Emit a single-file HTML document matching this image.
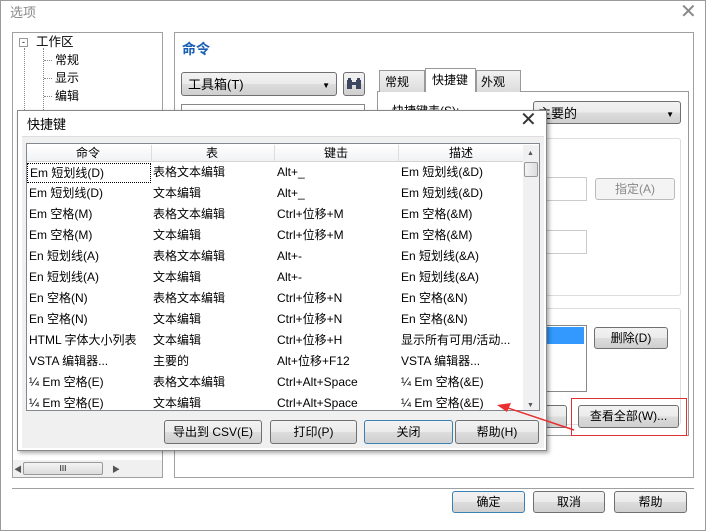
<!DOCTYPE html>
<html><head><meta charset="utf-8"><style>
*{margin:0;padding:0;box-sizing:border-box}
body{width:706px;height:531px;overflow:hidden;background:#fff;font-family:"Liberation Sans","Noto Sans CJK SC",sans-serif;font-size:12px;color:#000;position:relative;line-height:15px}
.a{position:absolute}
.btn{position:absolute;border:1px solid #707070;border-radius:3px;background:linear-gradient(#f2f2f2,#ebebeb 50%,#dddddd 50%,#cfcfcf);text-align:center;font-size:12px;white-space:nowrap}
.box{position:absolute;border:1px solid #a0a0a0;background:#fff}
.row{position:absolute;left:0;height:21px;width:497px}
.row span{position:absolute;top:3px;white-space:nowrap}
</style></head><body>
<div class="a" style="left:0;top:0;width:706px;height:531px;border:1px solid #9a9a9a;background:#fff"></div>
<div class="a" style="left:10px;top:5px;color:#8a8a8a;font-size:13px">选项</div>
<div class="a" style="left:680px;top:0px;color:#888;font-size:20px;line-height:24px">✕</div>

<!-- left tree -->
<div class="box" style="left:12px;top:32px;width:151px;height:446px"></div>
<div class="a" style="left:19px;top:38px;width:9px;height:9px;border:1px solid #999;font-size:9px;line-height:6px;text-align:center">-</div>
<div class="a" style="left:36px;top:35px;font-size:12.5px">工作区</div>
<div class="a" style="left:24px;top:48px;height:62px;border-left:1px dotted #888"></div>
<div class="a" style="left:43px;top:48px;height:62px;border-left:1px dotted #888"></div>
<div class="a" style="left:44px;top:60px;width:8px;border-top:1px dotted #888"></div>
<div class="a" style="left:44px;top:78px;width:8px;border-top:1px dotted #888"></div>
<div class="a" style="left:44px;top:96px;width:8px;border-top:1px dotted #888"></div>
<div class="a" style="left:55px;top:53px">常规</div>
<div class="a" style="left:55px;top:71px">显示</div>
<div class="a" style="left:55px;top:89px">编辑</div>
<div class="a" style="left:13px;top:460px;width:149px;height:17px;background:#f0f0f0"></div>
<div class="a" style="left:23px;top:462px;width:80px;height:13px;border:1px solid #999;border-radius:2px;background:linear-gradient(#f4f4f4,#dcdcdc);font-size:8px;text-align:center;line-height:11px">III</div>
<div class="a" style="left:14px;top:462px;font-size:8px;color:#555">◀</div>
<div class="a" style="left:112px;top:462px;font-size:8px;color:#555">▶</div>

<!-- right panel -->
<div class="box" style="left:174px;top:32px;width:520px;height:446px"></div>
<div class="a" style="left:182px;top:42px;color:#1a5fb4;font-size:14px;font-weight:bold">命令</div>
<div class="btn" style="left:181px;top:72px;width:156px;height:24px;text-align:left;padding:4px 6px;font-size:13px">工具箱(T)<span style="position:absolute;right:6px;top:5px;font-size:8px">▼</span></div>
<div class="btn" style="left:343px;top:72px;width:22px;height:24px"><svg width="20" height="22" viewBox="0 0 20 22"><rect x="3" y="7" width="5" height="9" fill="#3c4660"/><rect x="12" y="7" width="5" height="9" fill="#3c4660"/><rect x="7" y="9" width="6" height="3" fill="#3c4660"/><rect x="4" y="5" width="3" height="3" fill="#3c4660"/><rect x="13" y="5" width="3" height="3" fill="#3c4660"/></svg></div>
<div class="box" style="left:181px;top:104px;width:184px;height:10px;border-color:#888"></div>

<div class="box" style="left:377px;top:91px;width:312px;height:345px;border-color:#999"></div>
<div class="a" style="left:379px;top:70px;width:46px;height:22px;border:1px solid #999;border-bottom:none;background:linear-gradient(#f2f2f2,#dcdcdc);padding:4px 5px">常规</div>
<div class="a" style="left:425px;top:68px;width:51px;height:24px;border:1px solid #999;border-bottom:none;background:#fff;padding:4px 6px">快捷键</div>
<div class="a" style="left:476px;top:70px;width:45px;height:22px;border:1px solid #999;border-bottom:none;background:linear-gradient(#f2f2f2,#dcdcdc);padding:4px 4px">外观</div>
<div class="a" style="left:392px;top:104px">快捷键表(S):</div>
<div class="btn" style="left:533px;top:101px;width:148px;height:23px;text-align:left;padding:4px 4px;font-size:13px">主要的<span style="position:absolute;right:6px;top:5px;font-size:8px">▼</span></div>
<div class="a" style="left:545px;top:138px;width:136px;height:158px;border:1px solid #ddd;border-radius:3px"></div>
<div class="box" style="left:545px;top:177px;width:42px;height:24px;border-color:#ccc"></div>
<div class="btn" style="left:595px;top:178px;width:80px;height:22px;border-color:#bbb;color:#888;background:#f4f4f4;line-height:20px">指定(A)</div>
<div class="box" style="left:545px;top:230px;width:42px;height:24px;border-color:#ccc"></div>
<div class="a" style="left:545px;top:308px;width:136px;height:117px;border:1px solid #ddd;border-radius:3px"></div>
<div class="box" style="left:545px;top:325px;width:42px;height:67px;border-color:#888"></div>
<div class="a" style="left:546px;top:327px;width:38px;height:17px;background:#3399ff"></div>
<div class="btn" style="left:594px;top:327px;width:74px;height:22px;line-height:20px">删除(D)</div>
<div class="btn" style="left:540px;top:405px;width:27px;height:23px"></div>
<div class="btn" style="left:578px;top:405px;width:101px;height:23px;line-height:21px">查看全部(W)...</div>
<div class="a" style="left:571px;top:398px;width:116px;height:38px;border:1px solid #e03030"></div>

<div class="a" style="left:12px;top:488px;width:682px;border-top:1px solid #a0a0a0"></div>
<div class="btn" style="left:452px;top:491px;width:73px;height:22px;border-color:#3c7fb1;line-height:20px">确定</div>
<div class="btn" style="left:533px;top:491px;width:72px;height:22px;line-height:20px">取消</div>
<div class="btn" style="left:614px;top:491px;width:73px;height:22px;line-height:20px">帮助</div>

<!-- sub dialog -->
<div class="a" style="left:17px;top:110px;width:530px;height:341px;border:1px solid #888;background:#fff;box-shadow:2px 2px 4px rgba(0,0,0,.35)"></div>
<div class="a" style="left:27px;top:117px;font-size:13px">快捷键</div>
<div class="a" style="left:520px;top:108px;font-size:20px;color:#333;line-height:24px">✕</div>
<div class="a" style="left:22px;top:136px;width:522px;height:312px;background:#f0f0f0;border-top:1px solid #ddd"></div>
<div class="box" style="left:26px;top:143px;width:514px;height:268px;border-color:#828790"></div>
<div class="a" style="left:27px;top:145px;width:496px;height:17px;background:linear-gradient(#fff,#f1f2f4);border-bottom:1px solid #d5d5d5"></div>
<div class="a" style="left:151px;top:145px;height:17px;border-left:1px solid #ddd"></div>
<div class="a" style="left:274px;top:145px;height:17px;border-left:1px solid #ddd"></div>
<div class="a" style="left:398px;top:145px;height:17px;border-left:1px solid #ddd"></div>
<div class="a" style="left:76px;top:146px">命令</div>
<div class="a" style="left:206px;top:146px">表</div>
<div class="a" style="left:324px;top:146px">键击</div>
<div class="a" style="left:449px;top:146px">描述</div>
<div class="a" style="left:523px;top:145px;width:16px;height:265px;background:#f0f0f0"></div>
<div class="a" style="left:527px;top:146px;font-size:7px;color:#555">▲</div>
<div class="a" style="left:524px;top:162px;width:14px;height:15px;border:1px solid #999;border-radius:2px;background:linear-gradient(90deg,#f4f4f4,#dcdcdc)"></div>
<div class="a" style="left:527px;top:398px;font-size:7px;color:#555">▼</div>
<div class="a" style="left:27px;top:162px;width:496px;height:248px;overflow:hidden">
<div class="row" style="top:0"><span style="left:1px;outline:1px dotted #000;padding:0 2px;top:2px;width:122px;height:18px;line-height:18px">Em 短划线(D)</span><span style="left:126px">表格文本编辑</span><span style="left:250px">Alt+_</span><span style="left:374px">Em 短划线(&amp;D)</span></div>
<div class="row" style="top:21px"><span style="left:2px">Em 短划线(D)</span><span style="left:126px">文本编辑</span><span style="left:250px">Alt+_</span><span style="left:374px">Em 短划线(&amp;D)</span></div>
<div class="row" style="top:42px"><span style="left:2px">Em 空格(M)</span><span style="left:126px">表格文本编辑</span><span style="left:250px">Ctrl+位移+M</span><span style="left:374px">Em 空格(&amp;M)</span></div>
<div class="row" style="top:63px"><span style="left:2px">Em 空格(M)</span><span style="left:126px">文本编辑</span><span style="left:250px">Ctrl+位移+M</span><span style="left:374px">Em 空格(&amp;M)</span></div>
<div class="row" style="top:84px"><span style="left:2px">En 短划线(A)</span><span style="left:126px">表格文本编辑</span><span style="left:250px">Alt+-</span><span style="left:374px">En 短划线(&amp;A)</span></div>
<div class="row" style="top:105px"><span style="left:2px">En 短划线(A)</span><span style="left:126px">文本编辑</span><span style="left:250px">Alt+-</span><span style="left:374px">En 短划线(&amp;A)</span></div>
<div class="row" style="top:126px"><span style="left:2px">En 空格(N)</span><span style="left:126px">表格文本编辑</span><span style="left:250px">Ctrl+位移+N</span><span style="left:374px">En 空格(&amp;N)</span></div>
<div class="row" style="top:147px"><span style="left:2px">En 空格(N)</span><span style="left:126px">文本编辑</span><span style="left:250px">Ctrl+位移+N</span><span style="left:374px">En 空格(&amp;N)</span></div>
<div class="row" style="top:168px"><span style="left:2px">HTML 字体大小列表</span><span style="left:126px">文本编辑</span><span style="left:250px">Ctrl+位移+H</span><span style="left:374px">显示所有可用/活动...</span></div>
<div class="row" style="top:189px"><span style="left:2px">VSTA 编辑器...</span><span style="left:126px">主要的</span><span style="left:250px">Alt+位移+F12</span><span style="left:374px">VSTA 编辑器...</span></div>
<div class="row" style="top:210px"><span style="left:2px">¼ Em 空格(E)</span><span style="left:126px">表格文本编辑</span><span style="left:250px">Ctrl+Alt+Space</span><span style="left:374px">¼ Em 空格(&amp;E)</span></div>
<div class="row" style="top:231px"><span style="left:2px">¼ Em 空格(E)</span><span style="left:126px">文本编辑</span><span style="left:250px">Ctrl+Alt+Space</span><span style="left:374px">¼ Em 空格(&amp;E)</span></div>
</div>
<div class="btn" style="left:164px;top:420px;width:98px;height:24px;line-height:22px">导出到 CSV(E)</div>
<div class="btn" style="left:270px;top:420px;width:87px;height:24px;line-height:22px">打印(P)</div>
<div class="btn" style="left:364px;top:420px;width:89px;height:24px;line-height:22px;border-color:#3c7fb1">关闭</div>
<div class="btn" style="left:455px;top:420px;width:84px;height:24px;line-height:22px">帮助(H)</div>

<svg class="a" style="left:0;top:0" width="706" height="531"><line x1="574" y1="430" x2="505" y2="407" stroke="#e83030" stroke-width="1.5"/><polygon points="497,405 511,403 507,412" fill="#e83030"/></svg>
</body></html>
